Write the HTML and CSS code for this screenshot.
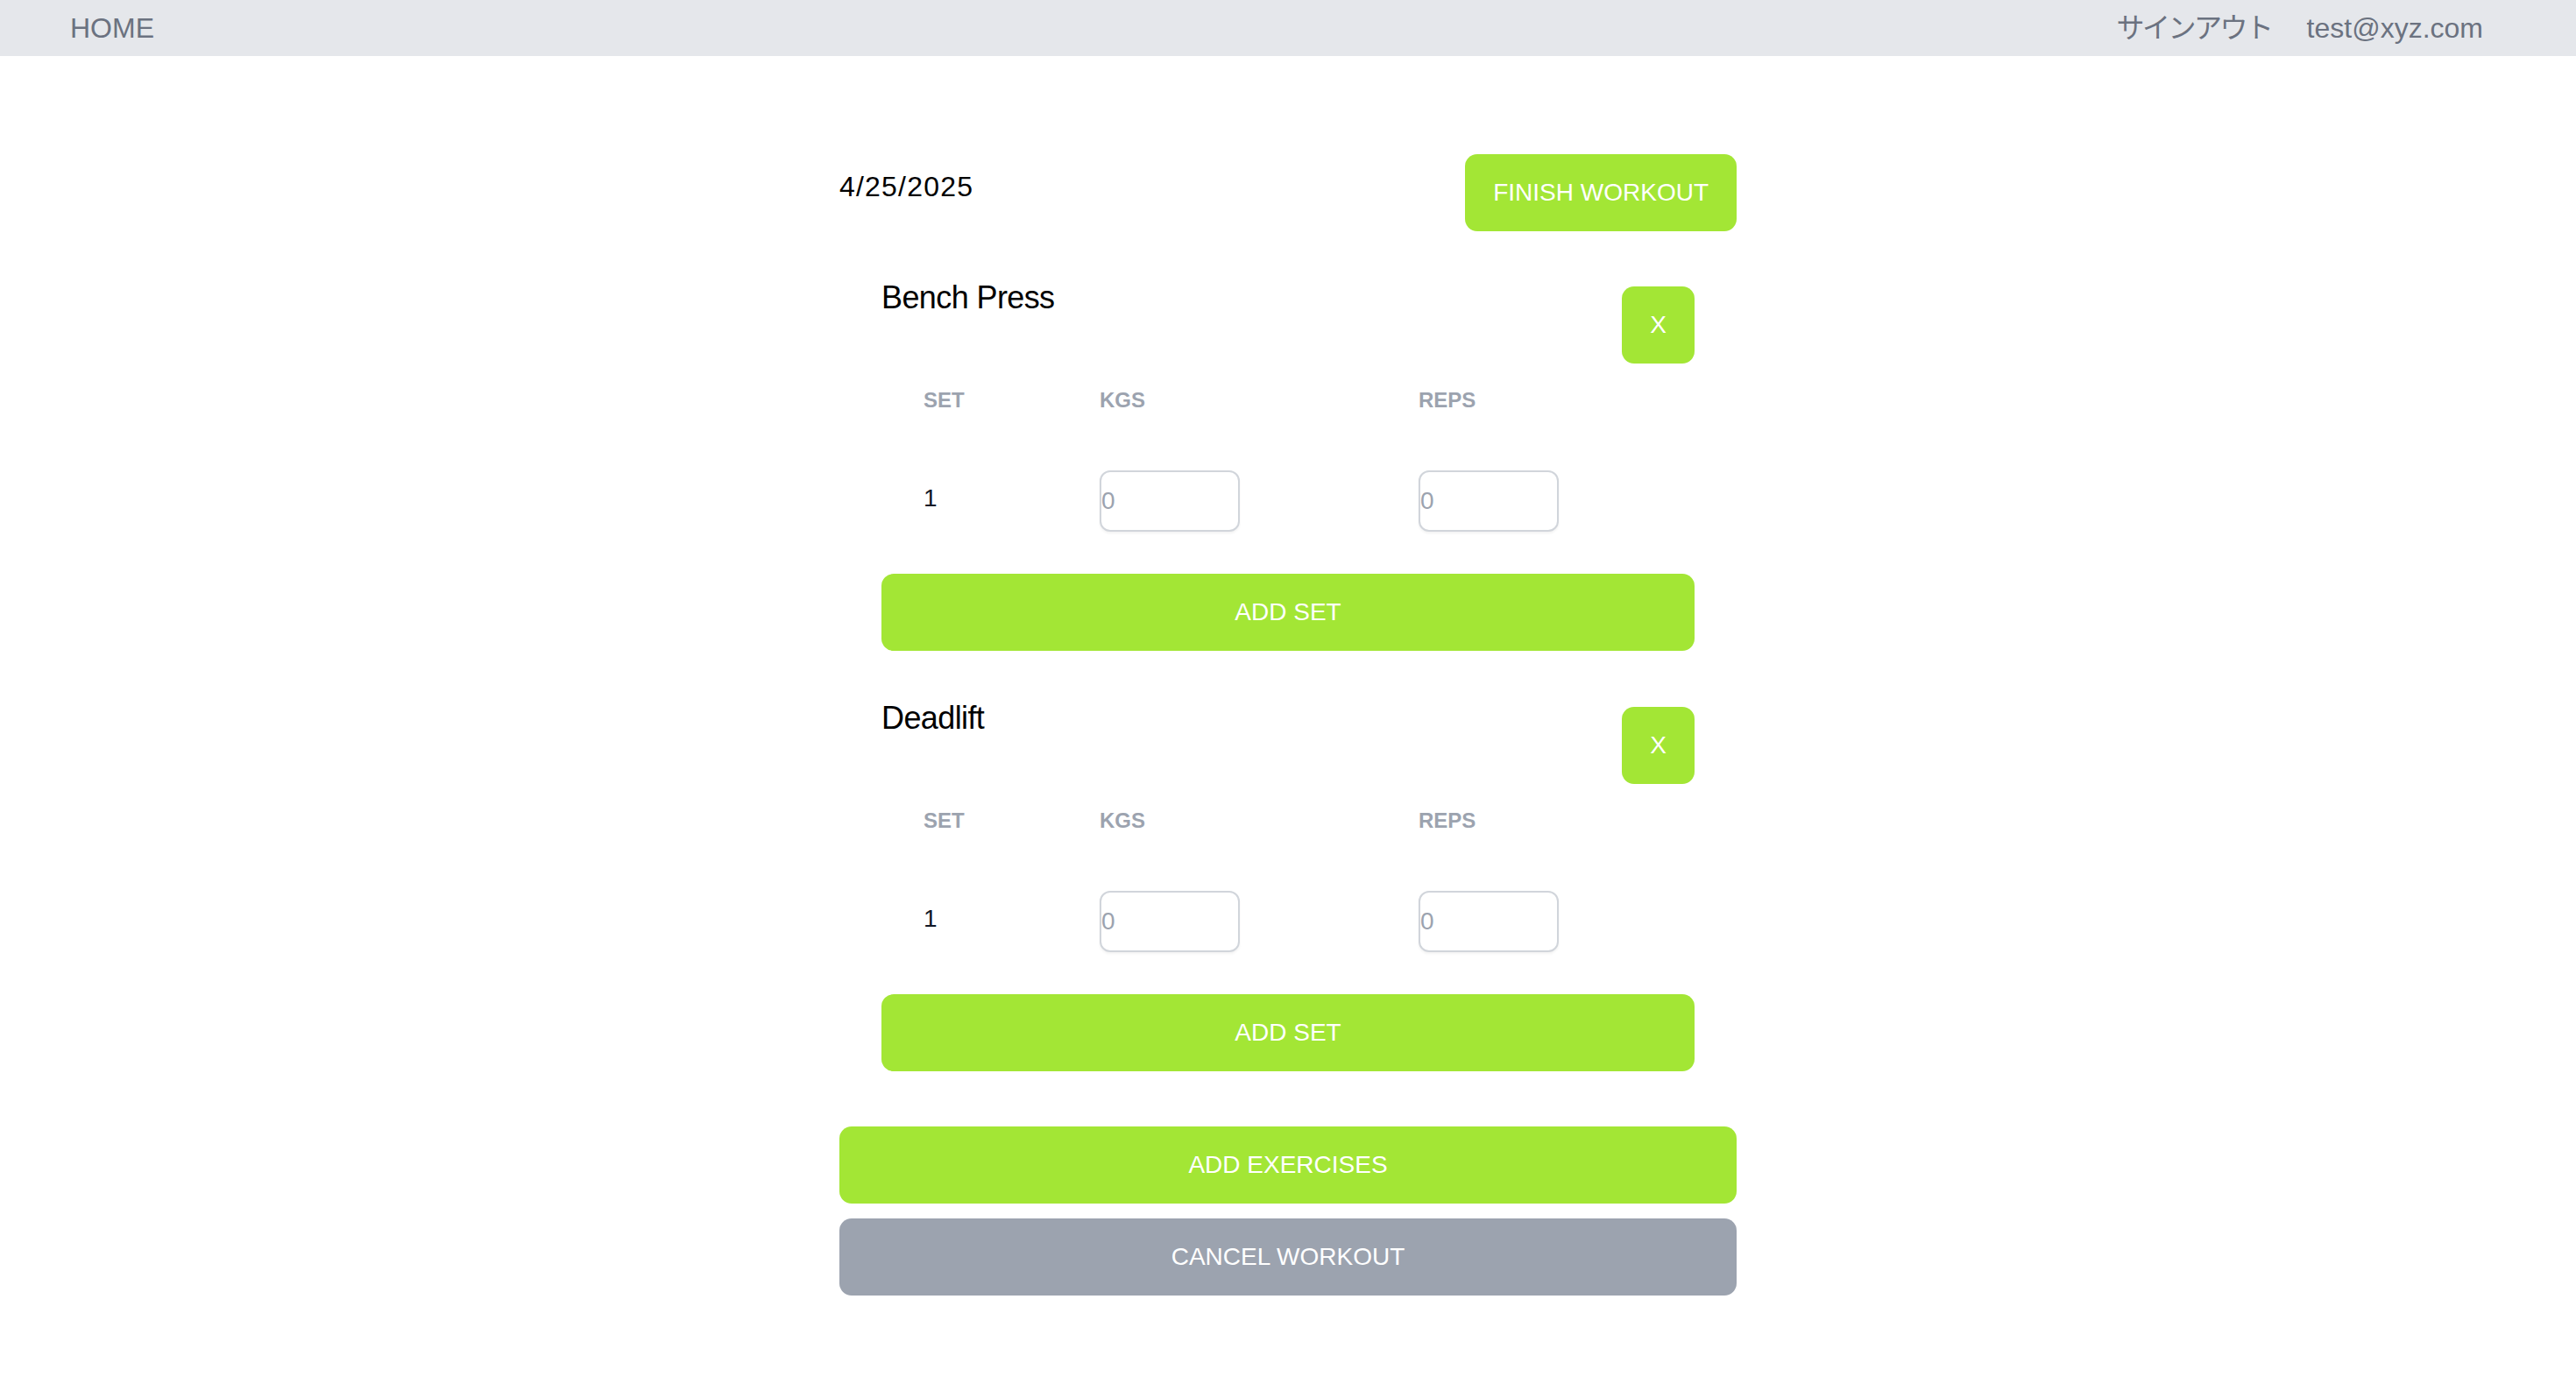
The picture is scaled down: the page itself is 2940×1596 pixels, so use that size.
FILE: index.html
```html
<!DOCTYPE html>
<html lang="ja">
<head>
<meta charset="utf-8">
<title>Workout</title>
<link rel="stylesheet" href="styles.css">
</head>
<body>
<nav class="nav">
  <a class="nav-link">HOME</a>
  <div class="nav-right">
    <a class="nav-link nav-jp">サインアウト</a>
    <span class="nav-link">test@xyz.com</span>
  </div>
</nav>
<main class="main">
  <div class="top">
    <div class="date">4/25/2025</div>
    <button class="btn btn-finish">FINISH WORKOUT</button>
  </div>

  <section class="card">
    <div class="card-head">
      <h2 class="title">Bench Press</h2>
      <button class="btn btn-x">X</button>
    </div>
    <div class="sets">
      <div class="th">SET</div>
      <div class="th">KGS</div>
      <div class="th">REPS</div>
    </div>
    <div class="sets row">
      <div class="td num">1</div>
      <div class="td"><input class="inp" type="text" placeholder="0"></div>
      <div class="td"><input class="inp" type="text" placeholder="0"></div>
    </div>
    <button class="btn btn-wide">ADD SET</button>
  </section>

  <section class="card">
    <div class="card-head">
      <h2 class="title">Deadlift</h2>
      <button class="btn btn-x">X</button>
    </div>
    <div class="sets">
      <div class="th">SET</div>
      <div class="th">KGS</div>
      <div class="th">REPS</div>
    </div>
    <div class="sets row">
      <div class="td num">1</div>
      <div class="td"><input class="inp" type="text" placeholder="0"></div>
      <div class="td"><input class="inp" type="text" placeholder="0"></div>
    </div>
    <button class="btn btn-wide">ADD SET</button>
  </section>

  <div class="bottom">
    <button class="btn btn-wide">ADD EXERCISES</button>
    <button class="btn btn-wide btn-gray">CANCEL WORKOUT</button>
  </div>
</main>
</body>
</html>
```

FILE: styles.css
```css
* { box-sizing: border-box; }
html, body {
  margin: 0;
  padding: 0;
  background: #ffffff;
  font-family: "Liberation Sans", Arial, "Noto Sans CJK JP", sans-serif;
}
.nav {
  height: 64px;
  background: #e5e7eb;
  display: flex;
  align-items: center;
  justify-content: space-between;
  padding: 0 106px 0 80px;
}
.nav-link {
  font-size: 32px;
  line-height: 48px;
  color: #6b7280;
  text-decoration: none;
}
.nav-jp {
  letter-spacing: -2.5px;
}
.nav-right {
  display: flex;
  align-items: center;
  gap: 40px;
}
.main {
  width: 1024px;
  margin: 0 auto;
  padding-top: 112px;
}
.top {
  display: flex;
  justify-content: space-between;
  align-items: flex-start;
  margin-bottom: 31px;
}
.date {
  font-size: 32px;
  line-height: 48px;
  margin-top: 13px;
  color: #000;
  letter-spacing: 1.2px;
}
.btn {
  border: none;
  background: #a3e635;
  color: #ffffff;
  font-family: inherit;
  font-size: 28px;
  line-height: 40px;
  border-radius: 14px;
  cursor: pointer;
  padding: 0;
}
.btn-finish {
  height: 88px;
  padding: 0 32px;
}
.card {
  padding: 32px 48px;
}
.card-head {
  display: flex;
  justify-content: space-between;
  align-items: flex-start;
}
.title {
  margin: 0;
  font-size: 36px;
  line-height: 26px;
  font-weight: 400;
  color: #000;
  letter-spacing: -0.6px;
}
.btn-x {
  width: 83px;
  height: 88px;
}
.sets {
  display: grid;
  grid-template-columns: 201px 364px 1fr;
}
.th {
  padding: 26px 0 24px 48px;
  font-size: 24px;
  line-height: 32px;
  font-weight: 700;
  color: #9ca3af;
  text-transform: uppercase;
}
.row {
  align-items: center;
  padding: 40px 0 48px;
}
.td {
  padding-left: 48px;
  display: flex;
  align-items: center;
}
.num {
  font-size: 28px;
  line-height: 40px;
  color: #111827;
  margin-bottom: 7px;
}
.inp {
  width: 160px;
  height: 70px;
  border: 2px solid #d1d5db;
  border-radius: 12px;
  padding: 0;
  font-family: inherit;
  font-size: 28px;
  color: #111827;
  background: #fff;
  box-shadow: 0 2px 3px rgba(0, 0, 0, 0.05);
  outline: none;
}
.inp::placeholder {
  color: #9ca3af;
}
.btn-wide {
  display: block;
  width: 100%;
  height: 88px;
}
.bottom {
  margin-top: 31px;
  display: flex;
  flex-direction: column;
  gap: 17px;
}
.btn-gray {
  background: #9ca3af;
}
```
